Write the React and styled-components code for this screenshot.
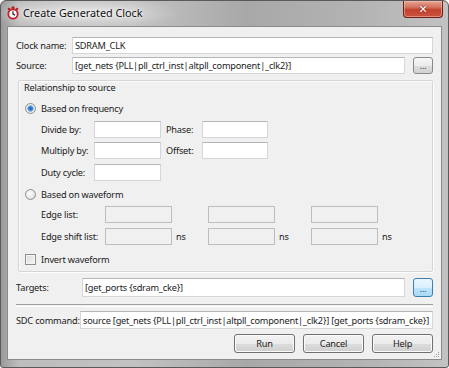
import React from "react";
import styled, {createGlobalStyle} from "styled-components";

const Global = createGlobalStyle`
  html, body { margin: 0; padding: 0; background: #ffffff; }
  body {
    font-family: "Noto Sans", "Open Sans", sans-serif;
    font-size: 9.2px;
    letter-spacing: -0.2px;
    color: #1b1b1b;
  }
`;

const Window = styled.div`
  width: 449px;
  height: 368px;
  box-sizing: border-box;
  border: 1px solid #5a5a5a;
  border-radius: 6px 6px 3px 3px;
  padding: 0 6px 7px 6px;
  display: flex;
  flex-direction: column;
  overflow: hidden;
  background:
    radial-gradient(ellipse 100px 16px at 80px 12px, rgba(255,255,255,0.6), rgba(255,255,255,0) 100%),
    linear-gradient(90deg, #9a9a9a 0%, #bdbdbd 4%, #c2c2c2 30%, #a8a8a8 55%, #b3b3b3 80%, #c2c2c2 100%);
`;

const TitleBar = styled.div`
  height: 25px;
  display: flex;
  align-items: flex-start;
  flex-shrink: 0;
`;

const TitleIcon = styled.svg`
  width: 14px;
  height: 14px;
  margin: 5px 3px 0 -1px;
  flex-shrink: 0;
`;

const TitleText = styled.div`
  font-size: 10.8px;
  letter-spacing: 0;
  line-height: 14px;
  margin-top: 5px;
  color: #111;
  text-shadow: 0 0 6px #fff, 0 0 3px #fff;
`;

const CloseButton = styled.div`
  margin-left: auto;
  margin-right: -1px;
  width: 40px;
  height: 17px;
  box-sizing: border-box;
  border: 1px solid #6e2017;
  border-top: none;
  border-radius: 0 0 4px 4px;
  background: linear-gradient(180deg, #e6a593 0%, #d2705c 40%, #c2412c 55%, #c95440 100%);
  box-shadow: inset 0 0 0 1px rgba(255,200,190,0.5);
  display: flex;
  align-items: center;
  justify-content: center;
  color: #fff;
  font-family: "DejaVu Sans", sans-serif;
  font-weight: bold;
  font-size: 11px;
  text-shadow: 0 0 2px #5a1208;
`;

const Client = styled.div`
  flex: 1;
  border: 1px solid #8b8b8b;
  background: #f0f0f0;
  padding: 9px 8px 0 8px;
  display: flex;
  flex-direction: column;
  position: relative;
`;

const Row = styled.div`
  display: flex;
  align-items: center;
  height: ${p => p.$h || 18}px;
  margin-top: ${p => p.$mt || 0}px;
  padding-left: ${p => p.$indent || 0}px;
`;

const Label = styled.div`
  width: ${p => p.$w}px;
  padding-left: ${p => p.$pl || 0}px;
  box-sizing: border-box;
  flex-shrink: 0;
  white-space: nowrap;
`;

const TextBox = styled.div`
  flex: ${p => (p.$w ? "none" : 1)};
  width: ${p => (p.$w ? `${p.$w}px` : "auto")};
  min-width: 0;
  height: ${p => p.$h || 17}px;
  box-sizing: border-box;
  border: 1px solid ${p => (p.$disabled ? "#bdbdbd" : "#d4d6da")};
  border-top-color: ${p => (p.$disabled ? "#bdbdbd" : "#b3b5ba")};
  background: ${p => (p.$disabled ? "#f0f0f0" : "#ffffff")};
  padding-left: 2px;
  display: flex;
  align-items: center;
  white-space: nowrap;
  overflow: hidden;
`;

const Browse = styled.div`
  width: 20px;
  height: ${p => p.$h || 17}px;
  margin-left: 8px;
  box-sizing: border-box;
  flex-shrink: 0;
  border: 1px solid ${p => (p.$focus ? "#3c7fb1" : "#8a8a8a")};
  border-radius: 3px;
  background: ${p => (p.$focus
    ? "linear-gradient(180deg, #eaf6fd 0%, #d9f0fc 50%, #bee6fd 51%, #a7d9f5 100%)"
    : "linear-gradient(180deg, #f6f6f6 0%, #ececec 50%, #dddddd 51%, #d2d2d2 100%)")};
  display: flex;
  align-items: flex-end;
  justify-content: center;
  padding-bottom: 3px;
  font-size: 9px;
  line-height: 9px;
  color: #444;
`;

const Group = styled.div`
  margin: 6px 0 0 2px;
  height: 192px;
  box-sizing: border-box;
  border: 1px solid #d5d5d5;
  box-shadow: inset 1px 1px 0 #fdfdfd, 1px 1px 0 #fdfdfd;
  border-radius: 2px;
  padding: 0 6px;
  display: flex;
  flex-direction: column;
`;

const GroupTitle = styled.div`
  height: 13px;
  margin: 0 0 0 -1px;
  line-height: 13px;
`;

const Radio = styled.span`
  width: 11px;
  height: 11px;
  box-sizing: border-box;
  border-radius: 50%;
  border: 1px solid #8e8f8f;
  background: ${p => (p.$on
    ? "radial-gradient(circle, #1d5fa6 0, #3d8ad8 2px, #a7c9ea 3.2px, #eeeeee 3.6px, #dcdcdc 100%)"
    : "radial-gradient(circle at 40% 40%, #ffffff 0, #e6e6e6 60%, #cfcfcf 100%)")};
  margin-right: 5px;
  flex-shrink: 0;
`;

const Check = styled.span`
  width: 11px;
  height: 11px;
  box-sizing: border-box;
  border: 1px solid #8e8f8f;
  background: linear-gradient(135deg, #dcdcdc 0%, #f6f6f6 100%);
  box-shadow: inset 0 0 0 1px #f4f4f4;
  margin-right: 5px;
  flex-shrink: 0;
`;

const Unit = styled.div`
  width: 36px;
  padding-left: 4px;
  box-sizing: border-box;
  flex-shrink: 0;
`;

const Separator = styled.div`
  height: 1px;
  border-top: 1px solid #a0a0a0;
  border-bottom: 1px solid #ffffff;
  margin-top: 7px;
`;

const ButtonRow = styled.div`
  display: flex;
  justify-content: flex-end;
  gap: 8px;
  margin-top: 5px;
`;

const Button = styled.div`
  width: 61px;
  height: 19px;
  box-sizing: border-box;
  border: 1px solid #707070;
  border-radius: 3px;
  background: linear-gradient(180deg, #f2f2f2 0%, #ebebeb 50%, #dddddd 51%, #cfcfcf 100%);
  box-shadow: inset 0 0 0 1px #fbfbfb;
  display: flex;
  align-items: center;
  justify-content: center;
`;

const Grip = styled.svg`
  position: absolute;
  right: 1px;
  bottom: 1px;
  width: 8px;
  height: 8px;
`;

const ClockIcon = () => (
  <TitleIcon viewBox="0 0 15 15">
    <rect x="6" y="0.5" width="3" height="2.5" fill="#b01c1c"/>
    <rect x="2" y="2" width="2.4" height="2.4" fill="#b01c1c" transform="rotate(-45 3.2 3.2)"/>
    <rect x="10.6" y="2" width="2.4" height="2.4" fill="#b01c1c" transform="rotate(45 11.8 3.2)"/>
    <circle cx="7.5" cy="8.5" r="6" fill="#c8202a"/>
    <circle cx="7.5" cy="8.5" r="4" fill="#ffffff"/>
    <path d="M7.5 5.6 V8.7 L9.6 9.8" stroke="#222" strokeWidth="1.3" fill="none"/>
  </TitleIcon>
);

const FreqRow = ({label, mt, right, duty}) => (
  <Row $indent={16} $mt={mt} $h={17}>
    <Label $w={53}>{label}</Label>
    <TextBox $w={67}/>
    {!duty && (
      <>
        <Label $w={41} $pl={5}>{right}</Label>
        <TextBox $w={66}/>
      </>
    )}
  </Row>
);

const WaveRow = ({label, mt, ns}) => (
  <Row $indent={16} $mt={mt} $h={17}>
    <Label $w={64}>{label}</Label>
    {[0, 1, 2].map(i => (
      <React.Fragment key={i}>
        <TextBox $w={67} $disabled/>
        <Unit>{ns ? "ns" : ""}</Unit>
      </React.Fragment>
    ))}
  </Row>
);

export default function App() {
  return (
    <>
      <Global/>
      <Window>
        <TitleBar>
          <ClockIcon/>
          <TitleText>Create Generated Clock</TitleText>
          <CloseButton>✕</CloseButton>
        </TitleBar>
        <Client>
          <Row>
            <Label $w={56}>Clock name:</Label>
            <TextBox>SDRAM_CLK</TextBox>
          </Row>
          <Row $mt={2}>
            <Label $w={56}>Source:</Label>
            <TextBox>[get_nets {"{"}PLL|pll_ctrl_inst|altpll_component|_clk2{"}"}]</TextBox>
            <Browse>...</Browse>
          </Row>
          <Group>
            <GroupTitle>Relationship to source</GroupTitle>
            <Row $mt={7} $h={14}>
              <Radio $on/>
              <span>Based on frequency</span>
            </Row>
            <FreqRow label="Divide by:" right="Phase:" mt={6}/>
            <FreqRow label="Multiply by:" right="Offset:" mt={4}/>
            <FreqRow label="Duty cycle:" duty mt={5}/>
            <Row $mt={6} $h={14}>
              <Radio/>
              <span>Based on waveform</span>
            </Row>
            <WaveRow label="Edge list:" mt={5}/>
            <WaveRow label="Edge shift list:" ns mt={5}/>
            <Row $mt={7} $h={14}>
              <Check/>
              <span>Invert waveform</span>
            </Row>
          </Group>
          <Row $mt={6} $h={19}>
            <Label $w={66}>Targets:</Label>
            <TextBox $h={19}>[get_ports {"{"}sdram_cke{"}"}]</TextBox>
            <Browse $focus $h={19}>...</Browse>
          </Row>
          <Separator/>
          <Row $mt={4} $h={18}>
            <Label $w={64}>SDC command:</Label>
            <TextBox $h={18}>source [get_nets {"{"}PLL|pll_ctrl_inst|altpll_component|_clk2{"}"}] [get_ports {"{"}sdram_cke{"}"}]</TextBox>
          </Row>
          <ButtonRow>
            <Button>Run</Button>
            <Button>Cancel</Button>
            <Button>Help</Button>
          </ButtonRow>
          <Grip viewBox="0 0 8 8">
            {[[6, 2], [6, 4], [4, 4], [6, 6], [4, 6], [2, 6]].map(([x, y]) => (
              <rect key={`${x}-${y}`} x={x} y={y} width="1" height="1" fill="#a0a0a0"/>
            ))}
          </Grip>
        </Client>
      </Window>
    </>
  );
}
